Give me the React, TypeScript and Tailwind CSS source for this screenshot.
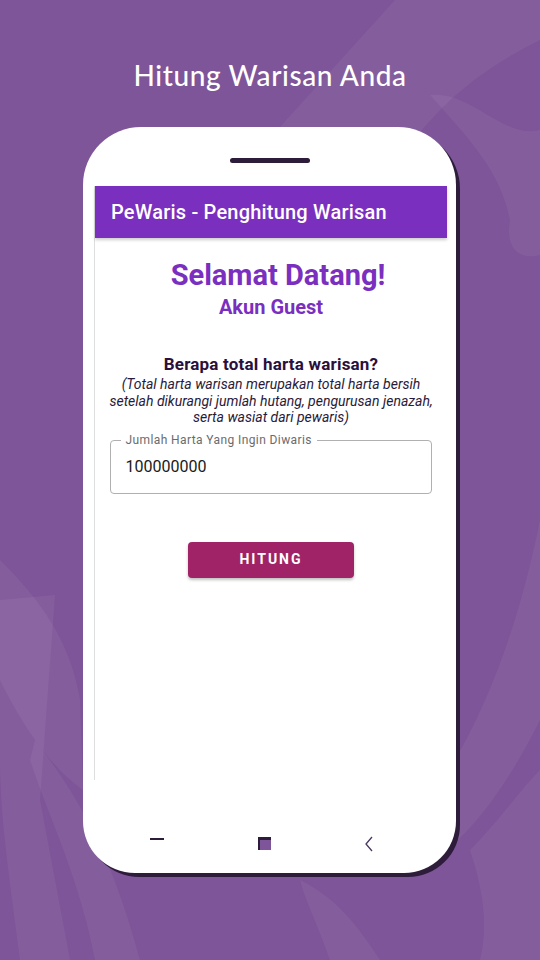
import React from 'react';

const Background: React.FC = () => (
  <svg className="absolute inset-0 pointer-events-none" width="540" height="960" viewBox="0 0 540 960">
    <g fill="#ffffff" fillOpacity="0.05">
      <path d="M395 0 L540 0 L540 40 C500 60 470 80 440 110 L330 230 L280 127 Z" />
      <path d="M430 95 C470 90 505 140 540 130 L540 255 C520 260 505 250 510 220 C500 170 470 140 430 95 Z" />
      <path d="M0 560 C40 600 70 640 80 700 L83 790 C40 760 10 700 0 680 Z" />
      <path d="M0 600 L55 595 L40 800 L70 960 L20 960 C10 880 0 820 0 760 Z" />
      <path d="M35 740 C80 800 110 850 140 960 L95 960 C80 880 50 820 30 760 Z" />
      <path d="M540 520 L540 720 C510 780 470 840 430 860 L455 760 C490 700 520 620 540 520 Z" />
      <path d="M300 880 C340 900 360 930 380 960 L330 960 C320 930 305 900 300 880 Z" />
      <path d="M470 850 C500 820 520 790 540 770 L540 960 L480 960 C490 920 480 880 470 850 Z" />
    </g>
  </svg>
);

export default function App() {
  return (
    <div
      className="relative w-[540px] h-[960px] overflow-hidden bg-[#7e5598]"
      style={{ fontFamily: 'Roboto, "Noto Sans", sans-serif' }}
    >
      <Background />

      <div className="relative flex flex-col items-center">
        {/* Headline */}
        <h1 className="mt-[56px] h-[38px] text-[28px] leading-[38px] text-white font-medium tracking-[0.6px] font-['Lato',sans-serif]">
          Hitung Warisan Anda
        </h1>

        {/* Phone */}
        <div className="mt-[33px] ml-[-1px] w-[373px] h-[746px] bg-white rounded-t-[58px] rounded-b-[52px] shadow-[4px_4px_0_#2d1d3b] flex flex-col">
          <div className="mx-auto mt-[31px] w-[80px] h-[5px] rounded-full bg-[#2d1d3b]" />

          {/* Screen */}
          <div className="mt-[23px] ml-[11px] w-[353px] h-[594px] flex flex-col border-l border-[#dedede]">
            <div className="h-[52px] bg-[#7b2fbf] flex items-center pl-[16px] shadow-[0_2px_3px_rgba(0,0,0,0.2)] relative z-10">
              <span className="text-white text-[20px] font-medium tracking-[0.2px]">PeWaris - Penghitung Warisan</span>
            </div>

            <div className="flex flex-col items-center pt-[20px]">
              <h2 className="ml-[14px] text-[#7b2fbf] text-[29px] leading-[34px] font-bold">Selamat Datang!</h2>
              <h3 className="mt-[2px] text-[#7b2fbf] text-[20px] leading-[26px] font-bold">Akun Guest</h3>

              <p className="mt-[33px] text-[#2a103d] text-[17px] leading-[22px] font-bold tracking-[0.2px]">Berapa total harta warisan?</p>
              <p className="mt-[1px] px-[12px] text-center text-[#2a1a3a] text-[14px] leading-[16.5px] italic">
                (Total harta warisan merupakan total harta bersih setelah dikurangi jumlah hutang, pengurusan jenazah, serta wasiat dari pewaris)
              </p>

              {/* Outlined input */}
              <div className="relative mt-[14px] ml-[-1px] w-[322px] h-[54px] border border-[#b0b0b0] rounded-[4px] flex items-center px-[15px]">
                <span className="absolute left-[10px] top-[-9px] bg-white px-[5px] text-[12px] leading-[16px] text-[#6b6b6b] tracking-[0.4px]">
                  Jumlah Harta Yang Ingin Diwaris
                </span>
                <span className="text-[16px] text-[#1a1a1a] mt-[1px]">100000000</span>
              </div>

              <button className="mt-[48px] w-[166px] h-[36px] rounded-[4px] bg-[#a02367] text-white text-[14px] font-bold tracking-[2px] shadow-[0_2px_3px_rgba(0,0,0,0.25)]">
                HITUNG
              </button>
            </div>
          </div>

          {/* Navigation bar */}
          <div className="mt-[57px] h-[16px] flex items-start justify-between pl-[67px] pr-[82px]">
            <div className="mt-[1px] w-[14px] h-[2px] bg-[#2d1d3b]" />
            <div className="w-[13px] h-[13px] bg-[#2d1d3b] relative">
              <div className="absolute left-[2px] top-[3px] w-[11px] h-[10px] bg-[#7e5598]" />
            </div>
            <svg width="10" height="16" viewBox="0 0 10 16" className="mt-[-1px]">
              <path d="M8 1 L2 8 L8 15" fill="none" stroke="#4a3660" strokeWidth="1.3" />
            </svg>
          </div>
        </div>
      </div>
    </div>
  );
}
